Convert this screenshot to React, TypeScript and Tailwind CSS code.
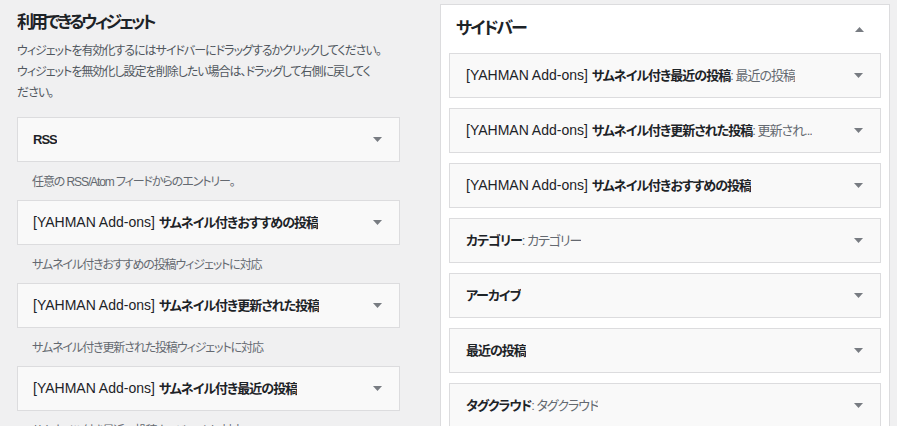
import React from 'react'

const available = [
  { name: 'RSS', desc: '任意の RSS/Atom フィードからのエントリー。' },
  { prefix: '[YAHMAN Add-ons]', name: 'サムネイル付きおすすめの投稿', desc: 'サムネイル付きおすすめの投稿ウィジェットに対応' },
  { prefix: '[YAHMAN Add-ons]', name: 'サムネイル付き更新された投稿', desc: 'サムネイル付き更新された投稿ウィジェットに対応' },
  { prefix: '[YAHMAN Add-ons]', name: 'サムネイル付き最近の投稿', desc: 'サムネイル付き最近の投稿ウィジェットに対応' },
]

const sidebar = [
  { prefix: '[YAHMAN Add-ons]', name: 'サムネイル付き最近の投稿', sub: '最近の投稿' },
  { prefix: '[YAHMAN Add-ons]', name: 'サムネイル付き更新された投稿', sub: '更新され...' },
  { prefix: '[YAHMAN Add-ons]', name: 'サムネイル付きおすすめの投稿' },
  { name: 'カテゴリー', sub: 'カテゴリー' },
  { name: 'アーカイブ' },
  { name: '最近の投稿' },
  { name: 'タグクラウド', sub: 'タグクラウド' },
]

function Caret({ up = false }: { up?: boolean }) {
  return (
    <svg width="9" height="5" viewBox="0 0 9 5" className="shrink-0 text-[#787c82]">
      <polygon points={up ? '0,5 9,5 4.5,0' : '0,0 9,0 4.5,5'} fill="currentColor" />
    </svg>
  )
}

function WidgetTitle({ prefix, name, sub }: { prefix?: string; name: string; sub?: string }) {
  return (
    <h3 className="text-[13px] leading-5 whitespace-nowrap overflow-hidden text-[#1d2327]">
      {prefix && <span className="text-[14px] font-normal">{prefix} </span>}
      <span className="font-bold tracking-[-1px]">{name}</span>
      {sub && <span className="font-normal text-[#646970] tracking-[-1px]">: {sub}</span>}
    </h3>
  )
}

export default function App() {
  return (
    <div className="min-h-screen bg-[#f0f0f1] flex items-start [font-family:'Liberation_Sans','Noto_Sans_CJK_JP',sans-serif] [font-feature-settings:'palt']">
      {/* Available widgets */}
      <div className="ml-[17px] w-[383px] pt-[10px]">
        <h2 className="text-[17px] leading-[26px] font-bold tracking-[-3px] text-[#1d2327]">利用できるウィジェット</h2>
        <p className="mt-[5px] text-[12px] leading-[21px] tracking-[-1px] text-[#50575e]">
          <span className="block whitespace-nowrap">ウィジェットを有効化するにはサイドバーにドラッグするかクリックしてください。</span>
          <span className="block whitespace-nowrap">ウィジェットを無効化し設定を削除したい場合は、ドラッグして右側に戻してく</span>
          <span className="block whitespace-nowrap">ださい。</span>
        </p>
        <div className="mt-[13px]">
          {available.map((w) => (
            <div key={w.name}>
              <div className="h-[45px] border border-[#dcdcde] bg-[#f9f9f9] flex items-center justify-between pl-[15px] pr-[17px]">
                <WidgetTitle prefix={w.prefix} name={w.name} />
                <Caret />
              </div>
              <p className="pt-[10px] pb-[8px] pl-[15px] text-[12px] leading-5 tracking-[-1.1px] text-[#646970] whitespace-nowrap">
                {w.desc}
              </p>
            </div>
          ))}
        </div>
      </div>

      {/* Sidebar */}
      <div className="ml-[40px] mt-[4px] w-[450px] bg-white border border-[#dcdcde] px-[8px] pb-[10px]">
        <div className="h-[48px] flex items-center justify-between pl-[7px] pr-[17px]">
          <h2 className="text-[17px] font-bold tracking-[-2px] text-[#1d2327]">サイドバー</h2>
          <Caret up />
        </div>
        <div className="flex flex-col gap-[10px]">
          {sidebar.map((w) => (
            <div
              key={w.name + (w.sub ?? '')}
              className="h-[45px] border border-[#dcdcde] bg-[#f9f9f9] flex items-center justify-between pl-[16px] pr-[17px]"
            >
              <WidgetTitle prefix={w.prefix} name={w.name} sub={w.sub} />
              <Caret />
            </div>
          ))}
        </div>
      </div>
    </div>
  )
}
